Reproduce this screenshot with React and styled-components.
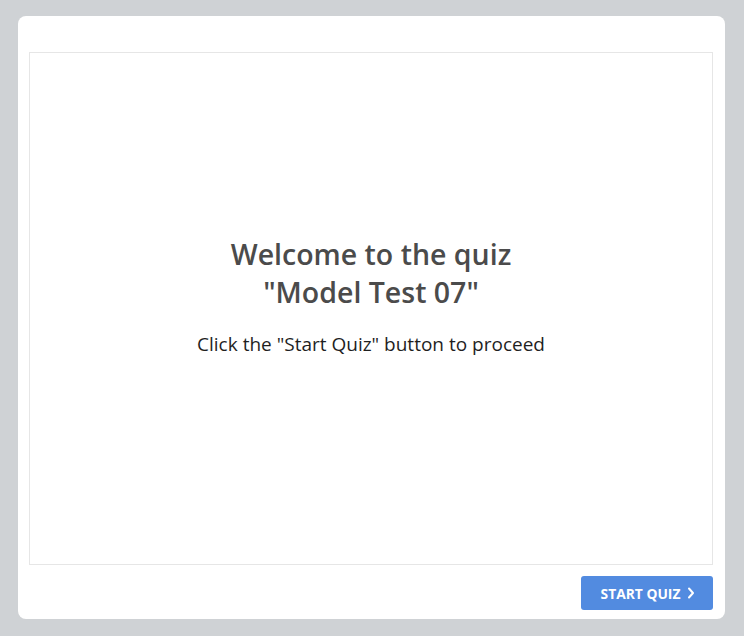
import React from "react";
import styled, { createGlobalStyle } from "styled-components";

const GlobalStyle = createGlobalStyle`
  html, body {
    margin: 0;
    padding: 0;
    background: #cfd2d5;
    font-family: "Open Sans", "Liberation Sans", sans-serif;
  }
  * { box-sizing: border-box; }
`;

const Page = styled.div`
  padding: 16px 19px 17px 18px;
`;

const Card = styled.div`
  width: 707px;
  height: 603px;
  background: #fff;
  border-radius: 8px;
  padding: 36px 12px 9px 11px;
  display: flex;
  flex-direction: column;
`;

const Stage = styled.div`
  height: 514px;
  border: 1px solid #e6e6e6;
  display: flex;
  flex-direction: column;
  align-items: center;
  justify-content: center;
  padding-bottom: 25px;
  text-align: center;
`;

const Title = styled.h1`
  margin: 0;
  font-size: 28.5px;
  line-height: 38px;
  font-weight: 600;
  color: #4b4b4b;
`;

const Subtitle = styled.p`
  margin: 20px 0 0;
  font-size: 19px;
  line-height: 26px;
  color: #1f1f1f;
`;

const Footer = styled.div`
  display: flex;
  justify-content: flex-end;
  margin-top: 11px;
`;

const Button = styled.button`
  width: 132px;
  height: 34px;
  border: none;
  border-radius: 3px;
  background: #528be0;
  color: #fff;
  font-family: "Open Sans", "Liberation Sans", sans-serif;
  font-weight: 700;
  font-size: 13.8px;
  display: flex;
  align-items: center;
  justify-content: center;
  gap: 7px;
  padding: 0 0 0 2px;
  cursor: pointer;
`;

function Chevron() {
  return (
    <svg width="8" height="12" viewBox="0 0 8 12" fill="none">
      <path d="M2 1.5L6 6L2 10.5" stroke="#fff" strokeWidth="2" strokeLinecap="round" strokeLinejoin="round" />
    </svg>
  );
}

export default function App() {
  return (
    <>
      <GlobalStyle />
      <Page>
        <Card>
          <Stage>
            <Title>
              Welcome to the quiz
              <br />
              "Model Test 07"
            </Title>
            <Subtitle>Click the "Start Quiz" button to proceed</Subtitle>
          </Stage>
          <Footer>
            <Button>
              START QUIZ
              <Chevron />
            </Button>
          </Footer>
        </Card>
      </Page>
    </>
  );
}
